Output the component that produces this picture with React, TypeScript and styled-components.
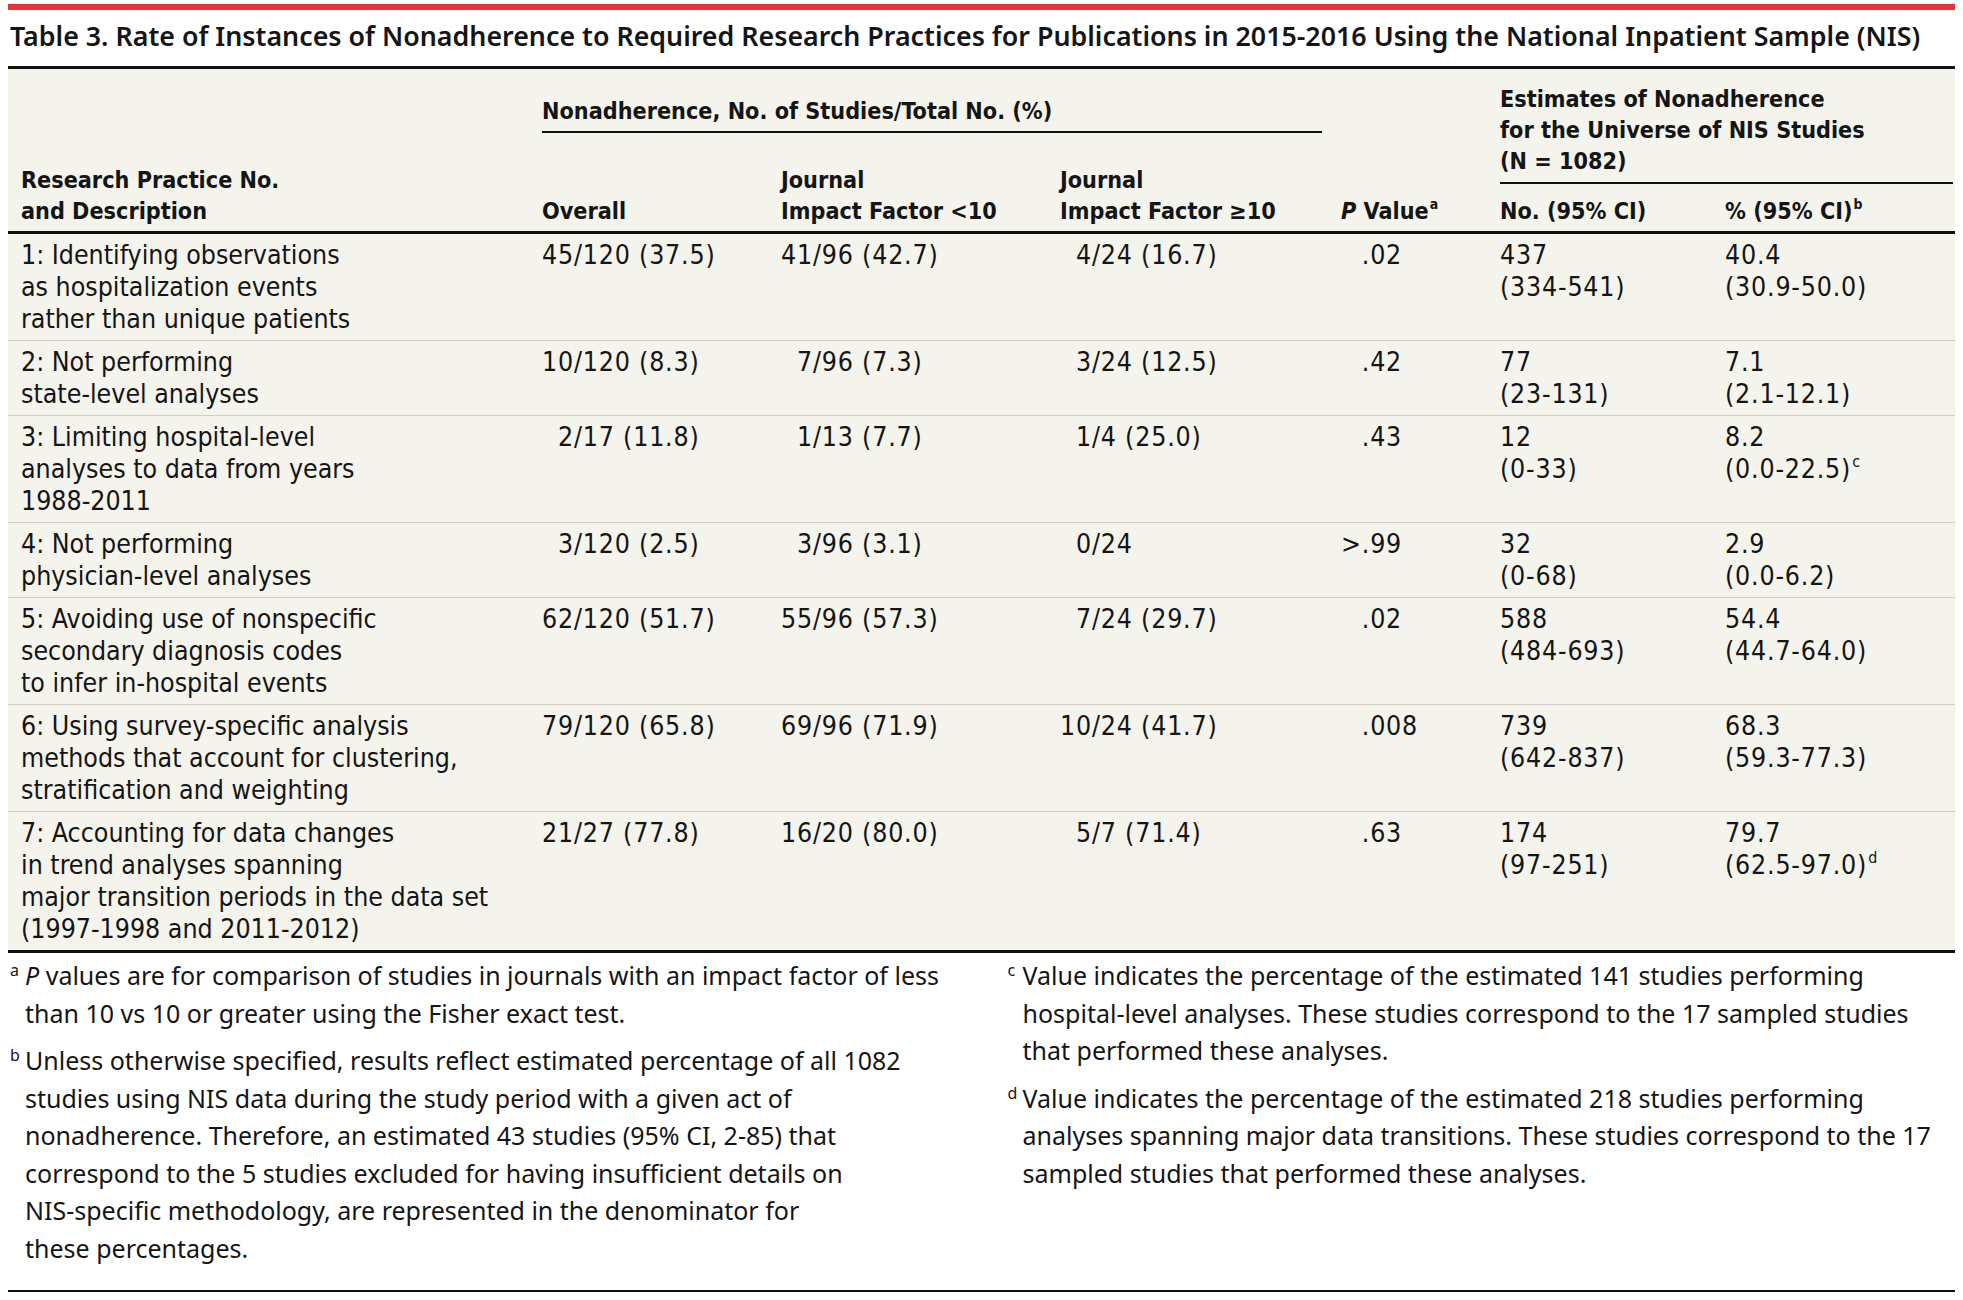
import React from 'react';
import styled, { createGlobalStyle } from 'styled-components';

const GlobalStyle = createGlobalStyle`
  html, body {
    margin: 0;
    padding: 0;
    background: #ffffff;
  }
  body {
    font-family: "Noto Sans", "DejaVu Sans", sans-serif;
    color: #151515;
  }
`;

const COLS = [521, 239, 279, 281, 159, 225, 243];

const Page = styled.div`
  width: 1947px;
  margin: 0 8px;
  padding-top: 4px;
`;

const RedBar = styled.div`
  height: 6px;
  background: #e5353b;
`;

const Title = styled.h1`
  margin: 0;
  padding: 0 0 5px 2px;
  font-family: "Noto Sans", sans-serif;
  font-weight: 600;
  font-size: 26.8px;
  line-height: 51px;
  white-space: nowrap;
  border-bottom: 3px solid #111;
`;

const Table = styled.div`
  background: #f4f3ec;
  font-family: "DejaVu Sans Condensed", "DejaVu Sans", sans-serif;
  font-stretch: condensed;
  font-size: 26.5px;
  border-bottom: 3px solid #111;
`;

const HeadRow = styled.div`
  display: flex;
  align-items: stretch;
  font-weight: 700;
  font-size: 23.2px;
  line-height: 31px;
  border-bottom: 3px solid #111;
`;

const HeadCell = styled.div<{ $w: number }>`
  box-sizing: border-box;
  width: ${(p) => p.$w}px;
  padding: 0 0 5px 13px;
  display: flex;
  flex-direction: column;
  justify-content: flex-end;
  white-space: nowrap;
`;

const Group = styled.div<{ $w: number }>`
  width: ${(p) => p.$w}px;
  display: flex;
  flex-direction: column;
`;

const Spanner = styled.div<{ $top: number; $bottom: number; $right: number }>`
  margin: 0 ${(p) => p.$right}px 0 13px;
  padding: ${(p) => p.$top}px 0 ${(p) => p.$bottom}px;
  border-bottom: 2px solid #111;
  white-space: nowrap;
`;

const SubRow = styled.div`
  flex: 1;
  display: flex;
  align-items: stretch;
  padding-top: 11px;
`;

const Row = styled.div`
  display: grid;
  grid-template-columns: ${COLS.map((c) => `${c}px`).join(' ')};
  padding: 5px 0;
  line-height: 32px;
  border-bottom: 1px solid #d2cec3;

  &:last-child {
    border-bottom: none;
  }
`;

const Cell = styled.div<{ $num?: boolean }>`
  padding-left: 13px;
  white-space: nowrap;
  letter-spacing: ${(p) => (p.$num ? '0.8px' : 'normal')};
`;

const Ghost = styled.span`
  visibility: hidden;
`;

const Sup = styled.sup`
  font-size: 0.6em;
  line-height: 0;
  vertical-align: 0.7em;
  margin-left: 1px;
  letter-spacing: normal;
`;

const Italic = styled.i`
  font-style: italic;
`;

const Notes = styled.div`
  display: grid;
  grid-template-columns: 1fr 1fr;
  column-gap: 50px;
  padding: 4px 0 23px 2px;
  border-bottom: 2px solid #111;
  font-family: "Noto Sans", sans-serif;
  font-size: 25px;
  line-height: 37.5px;
`;

const NoteCol = styled.div`
  display: flex;
  flex-direction: column;
  gap: 10px;
`;

const Note = styled.div`
  display: flex;
`;

const Mark = styled.span`
  flex: none;
  width: 15px;
  font-size: 16px;
  line-height: 26px;
`;

const NoteText = styled.div`
  white-space: nowrap;
`;

type RowData = {
  desc: string[];
  overall: string;
  low: string;
  high: string;
  p: string;
  no: [string, string];
  pct: [string, string];
  mark?: string;
};

const rows: RowData[] = [
  {
    desc: ['1: Identifying observations', 'as hospitalization events', 'rather than unique patients'],
    overall: '45/120 (37.5)',
    low: '41/96 (42.7)',
    high: '4/24 (16.7)',
    p: '.02',
    no: ['437', '(334-541)'],
    pct: ['40.4', '(30.9-50.0)'],
  },
  {
    desc: ['2: Not performing', 'state-level analyses'],
    overall: '10/120 (8.3)',
    low: '7/96 (7.3)',
    high: '3/24 (12.5)',
    p: '.42',
    no: ['77', '(23-131)'],
    pct: ['7.1', '(2.1-12.1)'],
  },
  {
    desc: ['3: Limiting hospital-level', 'analyses to data from years', '1988-2011'],
    overall: '2/17 (11.8)',
    low: '1/13 (7.7)',
    high: '1/4 (25.0)',
    p: '.43',
    no: ['12', '(0-33)'],
    pct: ['8.2', '(0.0-22.5)'],
    mark: 'c',
  },
  {
    desc: ['4: Not performing', 'physician-level analyses'],
    overall: '3/120 (2.5)',
    low: '3/96 (3.1)',
    high: '0/24',
    p: '>.99',
    no: ['32', '(0-68)'],
    pct: ['2.9', '(0.0-6.2)'],
  },
  {
    desc: ['5: Avoiding use of nonspecific', 'secondary diagnosis codes', 'to infer in-hospital events'],
    overall: '62/120 (51.7)',
    low: '55/96 (57.3)',
    high: '7/24 (29.7)',
    p: '.02',
    no: ['588', '(484-693)'],
    pct: ['54.4', '(44.7-64.0)'],
  },
  {
    desc: ['6: Using survey-specific analysis', 'methods that account for clustering,', 'stratification and weighting'],
    overall: '79/120 (65.8)',
    low: '69/96 (71.9)',
    high: '10/24 (41.7)',
    p: '.008',
    no: ['739', '(642-837)'],
    pct: ['68.3', '(59.3-77.3)'],
  },
  {
    desc: [
      '7: Accounting for data changes',
      'in trend analyses spanning',
      'major transition periods in the data set',
      '(1997-1998 and 2011-2012)',
    ],
    overall: '21/27 (77.8)',
    low: '16/20 (80.0)',
    high: '5/7 (71.4)',
    p: '.63',
    no: ['174', '(97-251)'],
    pct: ['79.7', '(62.5-97.0)'],
    mark: 'd',
  },
];

// keeps the slash of every count in one column
const Frac = ({ v }: { v: string }) => {
  const num = v.split('/')[0];
  return (
    <>
      {num.length < 2 && <Ghost>0</Ghost>}
      {v}
    </>
  );
};

// keeps the decimal point of every P value in one column
const PVal = ({ v }: { v: string }) => (v.startsWith('>') ? <>{v}</> : <><Ghost>&gt;</Ghost>{v}</>);

const Lines = ({ lines }: { lines: string[] }) => (
  <>
    {lines.map((l, i) => (
      <div key={i}>{l}</div>
    ))}
  </>
);

const Header = () => (
  <HeadRow>
    <HeadCell $w={COLS[0]}>
      <div>Research Practice No.</div>
      <div>and Description</div>
    </HeadCell>
    <Group $w={COLS[1] + COLS[2] + COLS[3]}>
      <Spanner $top={26} $bottom={5} $right={6}>
        Nonadherence, No. of Studies/Total No. (%)
      </Spanner>
      <SubRow>
        <HeadCell $w={COLS[1]}>Overall</HeadCell>
        <HeadCell $w={COLS[2]}>
          <div>Journal</div>
          <div>Impact Factor &lt;10</div>
        </HeadCell>
        <HeadCell $w={COLS[3]}>
          <div>Journal</div>
          <div>Impact Factor ≥10</div>
        </HeadCell>
      </SubRow>
    </Group>
    <HeadCell $w={COLS[4]}>
      <div>
        <Italic>P</Italic> Value<Sup>a</Sup>
      </div>
    </HeadCell>
    <Group $w={COLS[5] + COLS[6]}>
      <Spanner $top={14} $bottom={6} $right={2}>
        <div>Estimates of Nonadherence</div>
        <div>for the Universe of NIS Studies</div>
        <div>(N = 1082)</div>
      </Spanner>
      <SubRow>
        <HeadCell $w={COLS[5]}>No. (95% CI)</HeadCell>
        <HeadCell $w={COLS[6]}>
          <div>
            % (95% CI)<Sup>b</Sup>
          </div>
        </HeadCell>
      </SubRow>
    </Group>
  </HeadRow>
);

export default function App() {
  return (
    <Page>
      <GlobalStyle />
      <RedBar />
      <Title>
        Table 3. Rate of Instances of Nonadherence to Required Research Practices for Publications in 2015-2016 Using
        the National Inpatient Sample (NIS)
      </Title>
      <Table>
        <Header />
        {rows.map((r, i) => (
          <Row key={i}>
            <Cell>
              <Lines lines={r.desc} />
            </Cell>
            <Cell $num>
              <Frac v={r.overall} />
            </Cell>
            <Cell $num>
              <Frac v={r.low} />
            </Cell>
            <Cell $num>
              <Frac v={r.high} />
            </Cell>
            <Cell $num>
              <PVal v={r.p} />
            </Cell>
            <Cell $num>
              <Lines lines={r.no} />
            </Cell>
            <Cell $num>
              <div>{r.pct[0]}</div>
              <div>
                {r.pct[1]}
                {r.mark && <Sup>{r.mark}</Sup>}
              </div>
            </Cell>
          </Row>
        ))}
      </Table>
      <Notes>
        <NoteCol>
          <Note>
            <Mark>a</Mark>
            <NoteText>
              <Italic>P</Italic> values are for comparison of studies in journals with an impact factor of less
              <br />
              than 10 vs 10 or greater using the Fisher exact test.
            </NoteText>
          </Note>
          <Note>
            <Mark>b</Mark>
            <NoteText>
              Unless otherwise specified, results reflect estimated percentage of all 1082
              <br />
              studies using NIS data during the study period with a given act of
              <br />
              nonadherence. Therefore, an estimated 43 studies (95% CI, 2-85) that
              <br />
              correspond to the 5 studies excluded for having insufficient details on
              <br />
              NIS-specific methodology, are represented in the denominator for
              <br />
              these percentages.
            </NoteText>
          </Note>
        </NoteCol>
        <NoteCol>
          <Note>
            <Mark>c</Mark>
            <NoteText>
              Value indicates the percentage of the estimated 141 studies performing
              <br />
              hospital-level analyses. These studies correspond to the 17 sampled studies
              <br />
              that performed these analyses.
            </NoteText>
          </Note>
          <Note>
            <Mark>d</Mark>
            <NoteText>
              Value indicates the percentage of the estimated 218 studies performing
              <br />
              analyses spanning major data transitions. These studies correspond to the 17
              <br />
              sampled studies that performed these analyses.
            </NoteText>
          </Note>
        </NoteCol>
      </Notes>
    </Page>
  );
}
